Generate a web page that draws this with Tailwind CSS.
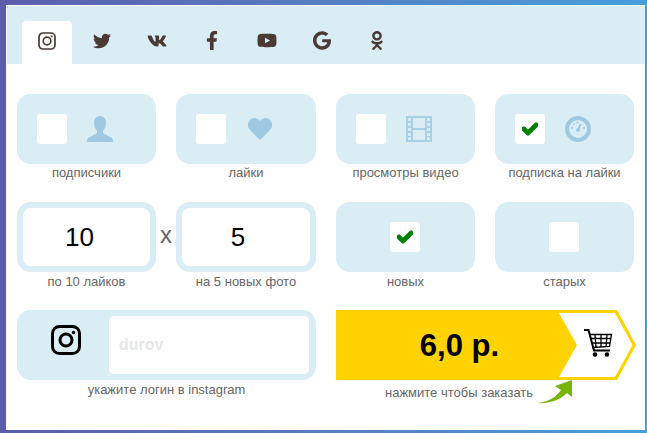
<!DOCTYPE html>
<html lang="en">
<head>
    <meta charset="UTF-8">
    <meta name="viewport" content="width=device-width, initial-scale=1.0">
    <title>Накрутка instagram</title>
    <script src="https://cdn.jsdelivr.net/npm/@tailwindcss/browser@4"></script>
</head>
<body class="h-[433px] w-[647px] overflow-hidden bg-gradient-to-r from-[#5b5dab] to-[#459fdb] pt-[5px] pr-[2px] pb-[3px] pl-[6px] font-['Liberation_Sans',sans-serif] text-[13px] text-[#666]">
    <div class="h-[425px] w-[639px] bg-white pt-px">

        <!-- tabs -->
        <div class="ml-px flex h-[58px] items-end gap-[5px] bg-[#daedf4] pl-[15px]">
            <a class="flex h-[43px] w-[50px] items-center justify-center rounded-t bg-white pb-[4px]">
                <svg class="h-[18px] w-[18px]" viewBox="0 0 18 18" fill="none" stroke="#4a3a35" stroke-width="1.7"><rect x="1" y="1" width="16" height="16" rx="4"/><circle cx="9" cy="9" r="3.8"/><circle cx="13.6" cy="4.4" r="1" fill="#4a3a35" stroke="none"/></svg>
            </a>
            <a class="flex h-[43px] w-[50px] items-center justify-center pb-[4px]">
                <svg class="h-[18px] w-[18px]" viewBox="0 0 512 512" fill="#4a3a35"><path d="M459.37 151.716c.325 4.548.325 9.097.325 13.645 0 138.72-105.583 298.558-298.558 298.558-59.452 0-114.68-17.219-161.137-47.106 8.447.974 16.568 1.299 25.34 1.299 49.055 0 94.213-16.568 130.274-44.832-46.132-.975-84.792-31.188-98.112-72.772 6.498.974 12.995 1.624 19.818 1.624 9.421 0 18.843-1.3 27.614-3.573-48.081-9.747-84.143-51.98-84.143-102.985v-1.299c13.969 7.797 30.214 12.67 47.431 13.319-28.264-18.843-46.781-51.005-46.781-87.391 0-19.492 5.197-37.36 14.294-52.954 51.655 63.675 129.3 105.258 216.365 109.807-1.624-7.797-2.599-15.918-2.599-24.04 0-57.828 46.782-104.934 104.934-104.934 30.213 0 57.502 12.67 76.67 33.137 23.715-4.548 46.456-13.32 66.599-25.34-7.798 24.366-24.366 44.833-46.132 57.827 21.117-2.273 41.584-8.122 60.426-16.243-14.292 20.791-32.161 39.308-52.628 54.253z"/></svg>
            </a>
            <a class="flex h-[43px] w-[50px] items-center justify-center pb-[4px]">
                <svg class="h-[18px] w-[20px]" viewBox="0 0 576 512" fill="#4a3a35"><path d="M545 117.7c3.7-12.5 0-21.7-17.8-21.7h-58.9c-15 0-21.9 7.9-25.6 16.7-16.8 38.2-39.3 79.4-64.5 103.9-10.5 10.5-15.2 13.9-21 13.9-2.9 0-9.1-3.4-9.1-15.9V117.7c0-15-4.2-21.7-16.6-21.7h-92.6c-9.4 0-15 7-15 13.5 0 14.2 21.2 17.5 23.4 57.5v86.8c0 19-3.4 22.5-10.9 22.5-20 0-68.6-73.4-97.4-157.4-5.8-16.3-11.5-22.9-26.6-22.9H38.8c-16.8 0-20.2 7.9-20.2 16.7 0 15.6 20 93.1 93.1 195.5C160.4 378.1 229 416 291.4 416c37.5 0 42.1-8.4 42.1-22.9 0-66.8-3.4-73.1 15.4-73.1 8.7 0 23.7 4.4 58.7 38.1 40 40 46.6 57.9 69 57.9h58.9c16.8 0 25.3-8.4 20.4-25-11.2-34.9-86.9-106.7-90.3-111.5-8.7-11.2-6.2-16.2 0-26.2.1-.1 72-101.3 79.4-135.6z"/></svg>
            </a>
            <a class="flex h-[43px] w-[50px] items-center justify-center pb-[4px]">
                <svg class="h-[19px] w-[12px]" viewBox="0 0 320 512" fill="#4a3a35"><path d="M279.14 288l14.22-92.66h-88.91v-60.13c0-25.35 12.42-50.06 52.24-50.06h40.42V6.26S260.43 0 225.36 0c-73.22 0-121.08 44.38-121.08 124.72v70.62H22.89V288h81.39v224h100.17V288z"/></svg>
            </a>
            <a class="flex h-[43px] w-[50px] items-center justify-center pb-[4px]">
                <svg class="h-[19px] w-[20px]" viewBox="0 0 576 512" fill="#4a3a35"><path d="M549.655 124.083c-6.281-23.65-24.787-42.276-48.284-48.597C458.781 64 288 64 288 64S117.22 64 74.629 75.486c-23.497 6.322-42.003 24.947-48.284 48.597-11.412 42.867-11.412 132.305-11.412 132.305s0 89.438 11.412 132.305c6.281 23.65 24.787 41.5 48.284 47.821C117.22 448 288 448 288 448s170.78 0 213.371-11.486c23.497-6.321 42.003-24.171 48.284-47.821 11.412-42.867 11.412-132.305 11.412-132.305s0-89.438-11.412-132.305zm-317.51 213.508V175.185l142.739 81.205-142.739 81.201z"/></svg>
            </a>
            <a class="flex h-[43px] w-[50px] items-center justify-center pb-[4px]">
                <svg class="h-[19px] w-[18px]" viewBox="0 0 488 512" fill="#4a3a35"><path d="M488 261.8C488 403.3 391.1 504 248 504 110.8 504 0 393.2 0 256S110.8 8 248 8c66.8 0 123 24.5 166.3 64.9l-67.5 64.9C258.5 52.6 94.3 116.6 94.3 256c0 86.5 69.1 156.6 153.7 156.6 98.2 0 135-70.4 140.8-106.9H248v-85.3h236.1c2.3 12.7 3.9 24.9 3.9 41.4z"/></svg>
            </a>
            <a class="flex h-[43px] w-[50px] items-center justify-center pb-[4px]">
                <svg class="h-[19px] w-[12px]" viewBox="0 0 320 512" fill="#4a3a35"><path d="M275.1 334c-27.4 17.4-65.1 24.3-90 26.9l20.9 20.6 76.3 76.3c27.9 28.6-17.5 73.3-45.7 45.7-19.1-19.4-47.1-47.4-76.3-76.6L84 503.4c-28.2 27.5-73.6-17.6-45.4-45.7 19.4-19.4 47.1-47.4 76.3-76.3l20.6-20.6c-24.6-2.6-62.9-9.1-90.6-26.9-32.6-21-46.9-33.3-34.3-59 7.4-14.6 27.7-26.9 54.6-5.7 0 0 36.3 28.9 94.9 28.9s94.9-28.9 94.9-28.9c26.9-21.1 47.1-8.9 54.6 5.7 12.4 25.7-1.9 38-34.5 59.1zM30.3 129.7C30.3 58 88.6 0 160 0s129.7 58 129.7 129.7c0 71.4-58.3 129.4-129.7 129.4s-129.7-58-129.7-129.4zm66 0c0 35.1 28.6 63.7 63.7 63.7s63.7-28.6 63.7-63.7c0-35.4-28.6-64-63.7-64s-63.7 28.6-63.7 64z"/></svg>
            </a>
        </div>

        <!-- form -->
        <div class="mt-[30px] grid grid-cols-[139px_140px_139px_139px] gap-x-[20px] pl-[11px]">

            <div class="h-[108px]">
                <div class="flex h-[70px] items-center gap-[20px] rounded-[14px] bg-[#daedf4] pl-[20px]">
                    <div class="h-[30px] w-[30px] rounded-[3px] bg-white"></div>
                    <svg class="h-[26px] w-[26px]" viewBox="0 0 26 26" fill="#9fc9e2"><path d="M13 0c4 0 6 3 6 7 0 3-1 6-3 8v2c2 2 6 3 9 5 1 1 1 3 1 4H0c0-1 0-3 1-4 3-2 7-3 9-5v-2c-2-2-3-5-3-8 0-4 2-7 6-7z"/></svg>
                </div>
                <p class="mt-px text-center leading-[16px]">подписчики</p>
            </div>

            <div class="h-[108px]">
                <div class="flex h-[70px] items-center gap-[22px] rounded-[14px] bg-[#daedf4] pl-[20px]">
                    <div class="h-[30px] w-[30px] rounded-[3px] bg-white"></div>
                    <svg class="h-[22px] w-[24px]" viewBox="0 0 24 22" fill="#9fc9e2"><path d="M12 22 2 12C0 10 0 8 0 6.500 0 3 3 0 6.500 0 9 0 11 1.500 12 3c1-1.500 3-3 5.500-3C21 0 24 3 24 6.500c0 1.500 0 3.500-2 5.500z"/></svg>
                </div>
                <p class="mt-px text-center leading-[16px]">лайки</p>
            </div>

            <div class="h-[108px]">
                <div class="flex h-[70px] items-center gap-[20px] rounded-[14px] bg-[#daedf4] pl-[20px]">
                    <div class="h-[30px] w-[30px] rounded-[3px] bg-white"></div>
                    <svg class="h-[26px] w-[26px]" viewBox="0 0 26 26"><path fill="#a9cfe5" fill-rule="evenodd" d="M0 0h26v26H0zM2 2v3h3V2zm0 5v3h3V7zm0 5v3h3v-3zm0 5v3h3v-3zm0 4.500V24h3v-2.500zM21 2v3h3V2zm0 5v3h3V7zm0 5v3h3v-3zm0 5v3h3v-3zm0 4.500V24h3v-2.500zM7 2v10h12V2zm0 12v10h12V14z"/></svg>
                </div>
                <p class="mt-px text-center leading-[16px]">просмотры видео</p>
            </div>

            <div class="h-[108px]">
                <div class="flex h-[70px] items-center gap-[20px] rounded-[14px] bg-[#daedf4] pl-[20px]">
                    <div class="flex h-[30px] w-[30px] items-center justify-center rounded-[3px] bg-white">
                        <svg class="h-[16px] w-[16px]" viewBox="0 0 512 512" fill="#008000" stroke="#008000" stroke-width="50"><path d="M173.898 439.404l-166.4-166.4c-9.997-9.997-9.997-26.206 0-36.204l36.203-36.204c9.997-9.998 26.207-9.998 36.204 0L192 312.69 432.095 72.596c9.997-9.997 26.207-9.997 36.204 0l36.203 36.204c9.997 9.997 9.997 26.206 0 36.204l-294.4 294.401c-9.998 9.997-26.207 9.997-36.204-.001z"/></svg>
                    </div>
                    <svg class="h-[26px] w-[26px]" viewBox="0 0 26 26" fill="none"><circle cx="13" cy="13" r="11" stroke="#9fc9e2" stroke-width="4"/><path d="M13 14 15.500 8" stroke="#9fc9e2" stroke-width="2"/><g fill="#9fc9e2"><circle cx="13" cy="14" r="2"/><circle cx="7" cy="12" r="1"/><circle cx="9" cy="8" r="1"/><circle cx="12.500" cy="6.500" r="1"/><circle cx="19" cy="12" r="1"/></g></svg>
                </div>
                <p class="mt-px text-center leading-[16px]">подписка на лайки</p>
            </div>

            <div class="col-span-2 grid h-[108px] grid-cols-[139px_20px_140px]">
                <div>
                    <input type="text" value="10" class="h-[70px] w-full rounded-[14px] border-[6px] border-[#daedf4] bg-white pr-[14px] text-center text-[26px] text-black outline-none">
                    <p class="mt-px text-center leading-[17px]">по 10 лайков</p>
                </div>
                <span class="h-[70px] text-center text-[24px] leading-[66px]">x</span>
                <div>
                    <input type="text" value="5" class="h-[70px] w-full rounded-[14px] border-[6px] border-[#daedf4] bg-white pr-[16px] text-center text-[26px] text-black outline-none">
                    <p class="mt-px text-center leading-[17px]">на 5 новых фото</p>
                </div>
            </div>

            <div class="h-[108px]">
                <div class="flex h-[70px] items-center justify-center rounded-[14px] bg-[#daedf4] pr-px">
                    <div class="flex h-[30px] w-[30px] items-center justify-center rounded-[3px] bg-white">
                        <svg class="h-[16px] w-[16px]" viewBox="0 0 512 512" fill="#008000" stroke="#008000" stroke-width="50"><path d="M173.898 439.404l-166.4-166.4c-9.997-9.997-9.997-26.206 0-36.204l36.203-36.204c9.997-9.998 26.207-9.998 36.204 0L192 312.69 432.095 72.596c9.997-9.997 26.207-9.997 36.204 0l36.203 36.204c9.997 9.997 9.997 26.206 0 36.204l-294.4 294.401c-9.998 9.997-26.207 9.997-36.204-.001z"/></svg>
                    </div>
                </div>
                <p class="mt-px text-center leading-[17px]">новых</p>
            </div>

            <div class="h-[108px]">
                <div class="flex h-[70px] items-center justify-center rounded-[14px] bg-[#daedf4] pr-px">
                    <div class="h-[30px] w-[30px] rounded-[3px] bg-white"></div>
                </div>
                <p class="mt-px text-center leading-[17px]">старых</p>
            </div>

            <div class="col-span-2">
                <div class="flex h-[70px] items-center rounded-[14px] bg-[#daedf4] p-[6px]">
                    <div class="flex w-[86px] justify-center pr-[1px] pb-[10px]">
                        <svg class="h-[30px] w-[30px]" viewBox="0 0 30 30" fill="none" stroke="#000" stroke-width="3"><rect x="1.500" y="1.500" width="27" height="27" rx="7"/><circle cx="15" cy="15" r="6"/><circle cx="22.500" cy="7.500" r="1.700" fill="#000" stroke="none"/></svg>
                    </div>
                    <input type="text" placeholder="durov" class="h-[58px] w-[200px] rounded-[5px] bg-white pl-[10px] text-[16px] font-bold outline-none placeholder:text-[#e6e6e6]">
                </div>
                <p class="mt-[1px] text-center leading-[17px]">укажите логин в instagram</p>
            </div>

            <div class="relative col-span-2">
                <button type="button" class="relative block h-[70px] w-[300px] text-left">
                    <svg class="absolute top-0 left-0" width="301" height="70" viewBox="0 0 301 70">
                        <path d="M0 0H281L300 35 281 70H0z" fill="#ffd200"/>
                        <path d="M223 3H279L296.500 35 279 67H223L241 35z" fill="#fff"/>
                    </svg>
                    <span class="relative block w-[247px] text-center text-[31px] leading-[69px] font-bold text-black">6,0 р.</span>
                    <svg class="absolute top-[18px] left-[247px]" width="30" height="30" viewBox="0 0 30 30" fill="none" stroke="#000"><path d="M1 2H5.500L11 22.500H27" stroke-width="2"/><path d="M6.500 6.500H28.500L26.500 18.500 9.500 19.500M12 6.500 13 19M18 6.500V19M24 6.500 23 19M7.500 10.500H28M9 15H27" stroke-width="1.300"/><circle cx="12" cy="26.500" r="2.300" fill="#000" stroke="none"/><circle cx="24" cy="26.500" r="2.300" fill="#000" stroke="none"/></svg>
                </button>
                <p class="mt-[4px] ml-[49px] w-[147px] text-center leading-[17px] whitespace-nowrap">нажмите чтобы заказать</p>
                <svg class="absolute top-[69px] left-[201px]" width="36" height="25" viewBox="0 0 36 25" fill="#79b40a"><path d="M0 24C12 23 19 18 24 11L18 7 35 1 35 18 30 14C23 21 12 25 0 24z"/></svg>
            </div>
        </div>
    </div>
</body>
</html>
